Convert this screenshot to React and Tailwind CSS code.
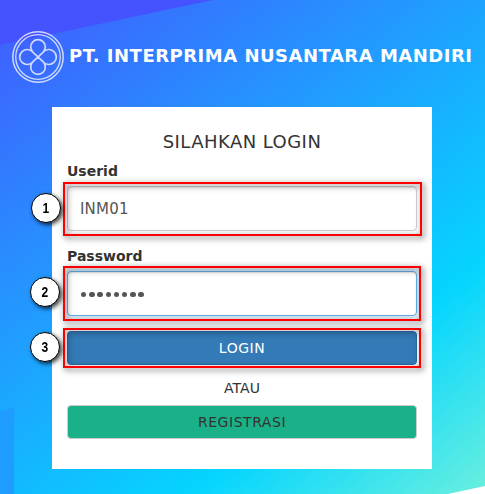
function Logo() {
  return (
    <svg className="h-[52px] w-[52px] shrink-0" viewBox="0 0 52 52" fill="none" stroke="#fff" strokeOpacity="0.75">
      <circle cx="26" cy="26" r="25.2" strokeWidth="1.5" />
      <circle cx="26" cy="26" r="22.3" strokeWidth="1.3" />
      <path
        strokeWidth="1.7"
        d="M21 21.3A7.300 7.300 0 1 1 31 21.300L21 30.700A7.300 7.300 0 1 0 31 30.700L21 21.300M21 21.300A7.500 7.500 0 1 0 21 30.700M31 21.300A7.500 7.500 0 1 1 31 30.700"
      />
    </svg>
  );
}

function Marker({ n, place }) {
  return (
    <div className={`absolute flex h-[30px] w-[30px] items-center justify-center rounded-full border border-black bg-white font-['Liberation_Sans',sans-serif] text-[14px] leading-none font-bold text-black shadow-[2px_2px_4px_rgba(0,0,0,0.75)] ${place}`}>
      <span className="scale-x-[0.86]">{n}</span>
    </div>
  );
}

function Frame({ place }) {
  return <div className={`pointer-events-none absolute border-2 border-[#f00] drop-shadow-[2px_2px_3px_rgba(0,0,0,0.7)] ${place}`} />;
}

const field = "flex h-[45px] items-center rounded-[4px] border bg-white px-3 text-[#555]";

export default function App() {
  return (
    <div className="relative h-[494px] w-[485px] overflow-hidden bg-[linear-gradient(141.7deg,#5533ff_-160px,#05d5ff_507px,#a6ffcb_798px)] font-['DejaVu_Sans',Verdana,sans-serif] text-[14px] text-[#333]">
      <div className="absolute inset-0 bg-[#4553ff] [clip-path:polygon(0_0,213px_0,0_45px)]" />
      <div className="absolute inset-0 bg-[#1f9cff] [clip-path:polygon(0_411px,14px_408px,14px_494px,0_494px)]" />
      <div className="absolute inset-0 bg-white [clip-path:polygon(448px_494px,485px_486px,485px_494px)]" />

      <header className="relative flex h-[107px] items-start pt-[31px] pl-3">
        <Logo />
        <h1 className="mt-[13px] ml-[5px] text-[18px] leading-6 font-bold tracking-[0.5px] whitespace-nowrap text-white">
          PT. INTERPRIMA NUSANTARA MANDIRI
        </h1>
      </header>

      <main className="relative ml-[52px] flex h-[362px] w-[380px] flex-col bg-white px-[15px] pt-[22px]">
        <h2 className="h-[25px] text-center text-[18px] leading-[25px] tracking-[0.45px] whitespace-nowrap">SILAHKAN LOGIN</h2>
        <label className="mt-[7px] h-5 leading-5 font-bold">Userid</label>
        <div className={`${field} mt-[5px] border-[#ccc] shadow-[inset_0_1px_1px_rgba(0,0,0,0.075)]`}>
          <span className="pt-[2px] text-[15px] tracking-[0.2px]">INM01</span>
        </div>
        <label className="mt-[15px] h-5 leading-5 font-bold">Password</label>
        <div className={`${field} mt-[5px] gap-[2.8px] border-[#66afe9] pl-[13px] shadow-[inset_0_1px_1px_rgba(0,0,0,0.075),0_0_8px_rgba(102,175,233,0.6)]`}>
          {Array.from({ length: 8 }, (_, i) => (
            <span key={i} className="mt-[2px] h-[5.4px] w-[5.4px] rounded-full bg-[#555]" />
          ))}
        </div>
        <button className="mt-[15px] h-[34px] rounded-[4px] border border-[#2e6da4] bg-[#337ab7] tracking-[0.5px] text-white">LOGIN</button>
        <div className="mt-[13px] h-5 text-center leading-5">ATAU</div>
        <button className="mt-[7px] h-[34px] rounded-[4px] border border-[#ccc] bg-[#1ab188] tracking-[0.55px]">REGISTRASI</button>
      </main>

      <Frame place="left-[63px] top-[182px] h-[54px] w-[359px]" />
      <Frame place="left-[63px] top-[266px] h-[55px] w-[358px]" />
      <Frame place="left-[63px] top-[328px] h-[40px] w-[358px]" />
      <Marker n="1" place="left-[31px] top-[193px]" />
      <Marker n="2" place="left-[30px] top-[277px]" />
      <Marker n="3" place="left-[30px] top-[332px]" />
    </div>
  );
}
